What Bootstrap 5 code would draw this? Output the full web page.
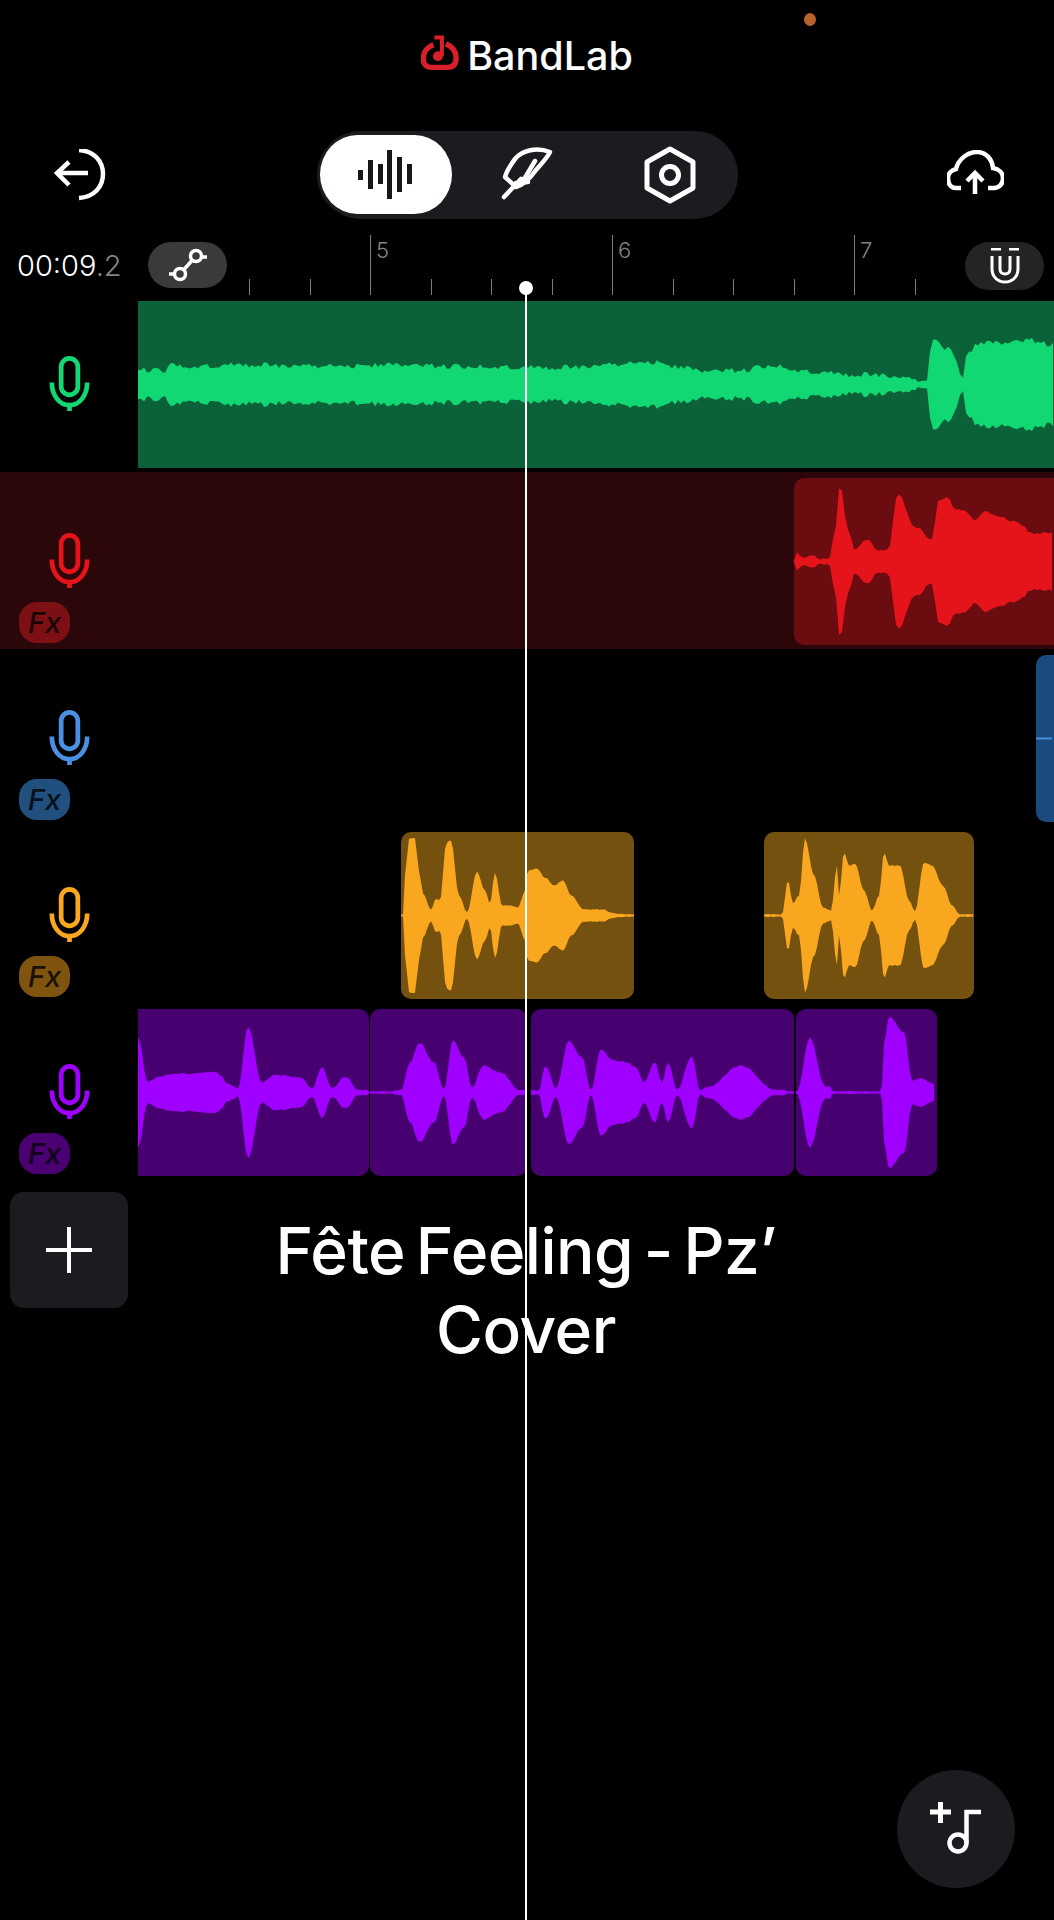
<!DOCTYPE html>
<html lang="en">
<head>
  <meta charset="UTF-8">
  <title>BandLab Studio</title>
  <meta name="viewport" content="width=device-width, initial-scale=1.0">
  <link href="https://cdn.jsdelivr.net/npm/bootstrap@5.3.0/dist/css/bootstrap.min.css" rel="stylesheet">
  <style>
    body { background: #000; font-family: "Inter", "Liberation Sans", sans-serif; color: #fff; }
    .stage { width: 1054px; height: 1920px; overflow: hidden; background: #000; }
    .rec-dot { left: 804px; top: 13px; width: 12px; height: 13px; background: #b8622c; }

    .top-head { height: 131px; padding-bottom: 18px; gap: 6px; }
    .brand-name { font-size: 39.5px; font-weight: 500; line-height: 1; }

    .tool-bar { height: 88px; padding: 0 50px 0 54px; }
    .mode-pill { width: 421px; height: 88px; padding: 4px 0 5px 3px; background: #1a1c1f; border-radius: 44px; }
    .mode-on { width: 132px; background: #fff; border-radius: 40px / 42px; }
    .mode-two { width: 146px; padding-left: 4px; }
    .mode-three { width: 140px; }

    .ruler { height: 76px; padding: 23px 10px 0 17px; }
    .time-read { width: 131px; height: 46px; font-size: 29px; font-weight: 300; line-height: 48px; }
    .time-read span { color: #858585; }
    .rule-tick { bottom: 0; width: 1px; height: 16px; background: #7d7d7d; }
    .rule-tick.major { height: 60px; }
    .rule-num { top: 20px; font-size: 22px; font-weight: 300; line-height: 22px; color: #858585; }
    .snap-btn { width: 79px; height: 46px; background: #3a3a3c; border-radius: 23px; z-index: 1; }
    .snap-btn.dim { height: 48px; background: #232426; border-radius: 24px; }

    .trk-row { height: 177px; }
    .trk-head { width: 138px; padding: 61px 0 0 19px; }
    .trk-mic { width: 41px; height: 55px; margin-left: 30px; color: var(--wave); }
    .fx-tag { width: 51px; height: 41px; margin-top: 14px; background: var(--fx); border-radius: 18px; font-size: 29px; font-weight: 500; font-style: italic; line-height: 41px; color: rgba(0, 0, 0, .8); }
    .clip-box { top: 5.5px; height: 167px; background: var(--clip); border-radius: 10px; overflow: hidden; }
    .clip-box.flat-left { border-top-left-radius: 0; border-bottom-left-radius: 0; }
    .clip-box svg { display: block; width: 100%; height: 100%; }
    .clip-box path { fill: var(--wave); }

    .t-green { --wave: #12d873; --clip: #0b6239; }
    .t-green .clip-box { border-radius: 0; }
    .t-red { --wave: #e5141b; --clip: #6b0c10; --fx: #7c1014; background: #2b0709; }
    .t-blue { --wave: #4a90e2; --clip: #1b4a80; --fx: #21507f; }
    .t-orange { --wave: #f9a71f; --clip: #75510f; --fx: #7f540f; }
    .t-purple { --wave: #a000ff; --clip: #47006f; --fx: #4a0072; }

    .foot-area { padding-top: 12px; }
    .add-col { width: 138px; padding-left: 10px; }
    .add-track { width: 118px; height: 116px; background: #1a1c1f; border-radius: 14px; }
    .song-title { width: 776px; padding: 19px 118px 0; font-size: 64px; font-weight: 500; letter-spacing: -.5px; word-spacing: -6px; line-height: 79px; text-align: center; }

    .play-line { left: 525px; top: 288px; bottom: 0; width: 2px; background: #fff; z-index: 3; }
    .play-knob { left: 519px; top: 281px; width: 14px; height: 14px; background: #fff; z-index: 3; }
    .add-note { left: 897px; top: 1770px; width: 118px; height: 118px; background: #1a1c1f; }
  </style>
</head>
<body class="m-0">
  <svg width="0" height="0" class="position-absolute">
    <symbol id="mic" viewBox="0 0 41 56">
      <rect x="12" y="2.5" width="17" height="37" rx="8.5" fill="none" stroke="currentColor" stroke-width="4.8"/>
      <path d="M2.5 27C2.5 40 10 50 20.5 50C31 50 38.5 40 38.5 27M20.5 50V56" fill="none" stroke="currentColor" stroke-width="4.8"/>
    </symbol>
  </svg>

  <div class="stage position-relative">
    <div class="rec-dot position-absolute rounded-circle"></div>

    <header class="top-head d-flex justify-content-center align-items-center">
      <svg width="40" height="45" viewBox="10 10 45 50" preserveAspectRatio="xMidYMin meet">
        <path d="M24 22C16 25 12.5 32 12.5 38C12.5 45 17 47.5 22 47.5H40C46 47.5 49.5 44 49.5 37C49.5 30 45 24 38 21" fill="none" stroke="#d9202a" stroke-width="6"/>
        <path d="M25 14H36M33.5 14V35" fill="none" stroke="#d9202a" stroke-width="4.5"/>
        <circle cx="29" cy="35" r="5.5" fill="#d9202a"/>
      </svg>
      <span class="brand-name">BandLab</span>
    </header>

    <div class="tool-bar d-flex justify-content-between align-items-center">
      <svg width="54" height="52" viewBox="54 149 54 52" fill="none" stroke="#fff" stroke-width="4.5">
        <path d="M57 173H88M69 162L57 173L69 185"/>
        <path d="M79 150C94 151 103 161 103 174C103 187 94 197 79 198"/>
      </svg>
      <div class="mode-pill d-flex">
        <div class="mode-on d-flex align-items-center justify-content-center">
          <svg width="56" height="52" viewBox="0 0 56 52" fill="#15171a">
            <rect x="0" y="21" width="5" height="10"/><rect x="10" y="11" width="5" height="29"/>
            <rect x="20" y="15" width="5" height="20"/><rect x="29" y="1" width="5" height="49"/>
            <rect x="39" y="8" width="5" height="35"/><rect x="49" y="15" width="5" height="20"/>
          </svg>
        </div>
        <div class="mode-two d-flex align-items-center justify-content-center">
          <svg width="56" height="60" viewBox="190 20 56 60" fill="none" stroke="#fff" stroke-width="4.5" stroke-linecap="round" stroke-linejoin="round">
            <path d="M241 27C228 22 213 25 206 34C200 42 197 48 196 52L207 62C215 60 222 52 227 45C233 38 239 32 241 27Z"/>
            <path d="M195 72L212 54M226 36L214 56M207 58L219 57"/>
          </svg>
        </div>
        <div class="mode-three d-flex align-items-center justify-content-center ps-1">
          <svg width="52" height="58" viewBox="0 0 52 58" fill="none" stroke="#fff" stroke-width="5">
            <path d="M26 3L49 16V42L26 55L3 42V16Z" stroke-linejoin="round"/>
            <circle cx="26" cy="29" r="8.5"/>
          </svg>
        </div>
      </div>
      <svg width="57" height="50" viewBox="27 10 57 50" fill="none" stroke="#fff" stroke-width="4.5">
        <path d="M41 48H36C29 48 28 41 28 38C28 33 32 30 36 29C38 20 47 12 57 12C66 12 72 19 73 28C79 29 83 33 83 38C83 44 79 48 74 48H68"/>
        <path d="M55 54V33M47 41L55 33L63 41"/>
      </svg>
    </div>

    <div class="ruler position-relative d-flex" id="ruler">
      <div class="time-read">00:09<span>.2</span></div>
      <div class="snap-btn d-flex align-items-center justify-content-center">
        <svg width="42" height="36" viewBox="0 0 42 36" fill="none" stroke="#fff" stroke-width="3.5">
          <circle cx="29" cy="9" r="5.5"/><circle cx="13" cy="27" r="5.5"/>
          <path d="M17 22.5L25 13.5M34 10H40M2 27H8"/>
        </svg>
      </div>
      <div class="snap-btn dim ms-auto d-flex align-items-center justify-content-center">
        <svg width="30" height="36" viewBox="0 0 30 36" fill="none" stroke="#fff" stroke-width="3">
          <path d="M1 1H11M19 1H29"/>
          <path d="M2 8V21C2 29 8 34 15 34C22 34 28 29 28 21V8"/>
          <path d="M10 8V21C10 24 12 26 15 26C18 26 20 24 20 21V8"/>
        </svg>
      </div>
    </div>

    <div class="trk-row t-green position-relative" data-track="green">
      <div class="trk-head"><svg class="trk-mic d-block"><use href="#mic"/></svg></div>
    </div>
    <div class="trk-row t-red position-relative" data-track="red">
      <div class="trk-head"><svg class="trk-mic d-block"><use href="#mic"/></svg><div class="fx-tag text-center">Fx</div></div>
    </div>
    <div class="trk-row t-blue position-relative" data-track="blue">
      <div class="trk-head"><svg class="trk-mic d-block"><use href="#mic"/></svg><div class="fx-tag text-center">Fx</div></div>
    </div>
    <div class="trk-row t-orange position-relative" data-track="orange">
      <div class="trk-head"><svg class="trk-mic d-block"><use href="#mic"/></svg><div class="fx-tag text-center">Fx</div></div>
    </div>
    <div class="trk-row t-purple position-relative" data-track="purple">
      <div class="trk-head"><svg class="trk-mic d-block"><use href="#mic"/></svg><div class="fx-tag text-center">Fx</div></div>
    </div>

    <div class="foot-area d-flex">
      <div class="add-col">
        <div class="add-track d-flex align-items-center justify-content-center">
          <svg width="46" height="46" viewBox="0 0 46 46" stroke="#fff" stroke-width="4"><path d="M0 23H46M23 0V46"/></svg>
        </div>
      </div>
      <div class="song-title">Fête Feeling - Pz’ Cover</div>
    </div>

    <div class="play-line position-absolute"></div>
    <div class="play-knob position-absolute rounded-circle"></div>

    <div class="add-note position-absolute rounded-circle">
      <svg class="d-block" width="118" height="118" viewBox="37 30 118 118" fill="none" stroke="#fff" stroke-width="4.5">
        <path d="M70 72H91M80.5 62V83" stroke-width="5"/>
        <circle cx="98" cy="103" r="8.5"/>
        <path d="M106.5 103V72H121"/>
      </svg>
    </div>
  </div>

  <script>
    // [x, half height] points of each waveform, in page pixels
    const tracks = {
      green: {
        clips: [[138, 916, 'flat-left']], jitter: 2.8, step: 3,
        env: [[138,15],[165,14],[172,23],[180,18],[260,20],[300,18],[340,19],[400,19],[470,18],[540,17],[600,18],[612,20],[650,23],[680,17],[700,13],[740,14],[770,19],[810,13],[850,10],[880,10],[900,6],[928,4],[931,40],[934,47],[945,36],[950,38],[963,6],[967,32],[980,41],[1000,41],[1030,44],[1054,40]]
      },
      red: {
        clips: [[794, 280, '']], jitter: 1.2, step: 3,
        env: [[794,1],[796,10],[800,5],[815,5],[818,3],[829,3],[835,30],[840,78],[848,32],[855,12],[868,23],[878,11],[888,11],[898,68],[915,35],[932,22],[938,60],[947,65],[955,52],[965,50],[975,42],[985,50],[1000,45],[1015,40],[1025,35],[1030,28],[1054,28]]
      },
      blue: {
        clips: [[1036, 40, '']], jitter: 0, step: 4,
        env: [[1036,1],[1054,1]]
      },
      orange: {
        clips: [[401, 233, ''], [764, 210, '']], jitter: 0.4, step: 2,
        env: [[401,1],[403,1],[405,40],[409,77],[415,77],[419,45],[423,22],[431,6],[436,17],[440,15],[446,70],[448,75],[451,75],[459,20],[467,3],[477,44],[485,25],[490,12],[495,43],[502,10],[509,10],[518,8],[524,22],[528,45],[537,47],[545,38],[554,30],[563,35],[571,20],[584,6],[603,6],[614,2],[634,1],
              [764,1],[782,1],[788,35],[793,12],[799,20],[805,77],[814,40],[823,8],[831,5],[837,50],[839,20],[844,63],[849,50],[855,52],[864,25],[872,5],[879,20],[884,63],[889,50],[900,50],[909,15],[915,4],[924,53],[932,50],[943,30],[952,10],[960,1],[974,1]]
      },
      purple: {
        clips: [[138, 231, 'flat-left'], [370, 157, ''], [531, 263, ''], [796, 141, '']], jitter: 0.8, step: 2,
        env: [[138,55],[148,10],[158,16],[175,19],[195,19],[215,21],[230,8],[238,4],[248,65],[262,10],[275,18],[300,15],[312,4],[322,25],[332,4],[345,16],[358,3],[380,1],[401,2],[410,30],[419,50],[434,30],[444,3],[453,52],[464,35],[472,5],[483,27],[500,20],[520,2],[539,2],[545,27],[556,5],[569,52],[582,35],[591,3],[601,43],[612,33],[627,30],[636,25],[644,10],[655,30],[662,10],[668,30],[677,3],[692,36],[700,2],[707,5],[741,27],[775,3],[797,1],[810,55],[825,6],[830,6],[833,1],[881,1],[885,55],[889,76],[904,60],[912,12],[920,14],[935,8]]
      }
    };

    function ampAt(env, x) {
      for (let i = 1; i < env.length; i++) {
        if (x <= env[i][0]) {
          const [x0, a0] = env[i - 1], [x1, a1] = env[i];
          const t = (1 - Math.cos(Math.PI * (x - x0) / (x1 - x0))) / 2;
          return a0 + (a1 - a0) * t;
        }
      }
      return env[env.length - 1][1];
    }

    function wavePath(t) {
      const first = t.env[0][0], last = t.env[t.env.length - 1][0];
      const top = [], bottom = [];
      let seed = 7;
      for (let x = first; x <= last; x += t.step) {
        seed = (seed * 73 + 41) % 101;
        const a = Math.max(1, ampAt(t.env, x) + (seed / 50 - 1) * t.jitter);
        top.push(x + ' ' + (-a).toFixed(1));
        bottom.unshift(x + ' ' + a.toFixed(1));
      }
      return 'M' + top.concat(bottom).join('L') + 'Z';
    }

    document.querySelectorAll('[data-track]').forEach(row => {
      const t = tracks[row.dataset.track];
      const d = wavePath(t);
      row.insertAdjacentHTML('beforeend', t.clips.map(c => `
        <div class="clip-box position-absolute ${c[2]}" style="left:${c[0]}px;width:${c[1]}px">
          <svg viewBox="${c[0]} -83.5 ${c[1]} 167" preserveAspectRatio="none"><path d="${d}"/></svg>
        </div>`).join(''));
    });

    // ruler: a bar number every fourth tick
    const ruler = document.getElementById('ruler');
    let ticks = '';
    for (let i = 0; i < 12; i++) {
      const x = 249 + i * 60.5;
      const major = (i - 2) % 4 === 0;
      ticks += `<div class="rule-tick position-absolute ${major ? 'major' : ''}" style="left:${x}px"></div>`;
      if (major) ticks += `<div class="rule-num position-absolute" style="left:${x + 6}px">${5 + (i - 2) / 4}</div>`;
    }
    ruler.insertAdjacentHTML('beforeend', ticks);
  </script>
  <script src="https://cdn.jsdelivr.net/npm/bootstrap@5.3.0/dist/js/bootstrap.bundle.min.js"></script>
</body>
</html>
